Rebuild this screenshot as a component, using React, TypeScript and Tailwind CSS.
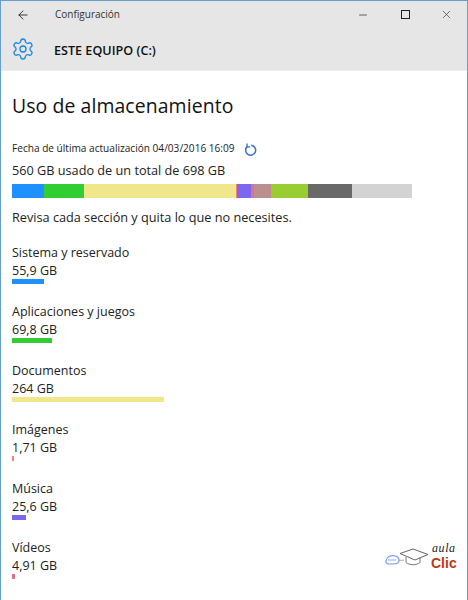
import { ArrowLeft, Minus, X, Settings } from 'lucide-react'

const segments = [
  { w: 'w-[32px]', bg: 'bg-[#1e90ff]' },
  { w: 'w-[40px]', bg: 'bg-[#32cd32]' },
  { w: 'w-[152px]', bg: 'bg-[#f0e68c]' },
  { w: 'w-[1px]', bg: 'bg-[#fa8072]' },
  { w: 'w-[14px]', bg: 'bg-[#7b68ee]' },
  { w: 'w-[3px]', bg: 'bg-[#db7093]' },
  { w: 'w-[17px]', bg: 'bg-[#bc8f8f]' },
  { w: 'w-[37px]', bg: 'bg-[#9acd32]' },
  { w: 'w-[44px]', bg: 'bg-[#696969]' },
  { w: 'w-[60px]', bg: 'bg-[#d3d3d3]' },
]

const sections = [
  { name: 'Sistema y reservado', size: '55,9 GB', w: 'w-[32px]', bg: 'bg-[#1e90ff]' },
  { name: 'Aplicaciones y juegos', size: '69,8 GB', w: 'w-[40px]', bg: 'bg-[#32cd32]' },
  { name: 'Documentos', size: '264 GB', w: 'w-[152px]', bg: 'bg-[#f0e68c]' },
  { name: 'Imágenes', size: '1,71 GB', w: 'w-[2px]', bg: 'bg-[#fa8072]' },
  { name: 'Música', size: '25,6 GB', w: 'w-[14px]', bg: 'bg-[#7b68ee]' },
  { name: 'Vídeos', size: '4,91 GB', w: 'w-[3px]', bg: 'bg-[#db7093]' },
]

function RefreshIcon() {
  return (
    <svg width="14" height="14" viewBox="0 0 14 14" fill="none" className="ml-[9px] mt-[3px]" stroke="#3a6fd8" strokeWidth="1.5">
      <path d="M3.6 3.2A5 5 0 1 0 7.2 2.2" />
      <path d="M3 0.6v3.2h3.2" strokeWidth="1.3" />
    </svg>
  )
}

function AulaClicLogo() {
  return (
    <div className="absolute left-[384px] top-[540px] flex items-start">
      <svg width="45" height="26" viewBox="0 0 45 26" fill="none" className="mt-[6px]">
        <path d="M1 14c.5-3.500 4.500-6 8-5.300 3 .5 5 2.500 5 4.800 0 2-2 3.500-5.500 3.500H4.500c-2.500 0-4-1-3.500-3z" stroke="#7d9fe8" strokeWidth="1.2" />
        <path d="M3 13h8" stroke="#7d9fe8" strokeWidth="0.9" />
        <path d="M14 13c2 .5 3 .5 5 0" stroke="#8a8a8a" strokeWidth="0.8" />
        <path d="M15 6.500 L28 2 L43 7.500 L30 13 Z" stroke="#666" strokeWidth="1" />
        <path d="M21 10v5.500c4 3 10 3 14 0V10" stroke="#777" strokeWidth="1" />
      </svg>
      <div className="ml-[1px] flex flex-col items-center">
        <span className="h-[14px] font-['Liberation_Serif',serif] text-[12px] italic leading-[14px] tracking-[0.6px] text-[#222]">aula</span>
        <span className="h-[16px] font-['Liberation_Sans',sans-serif] text-[14px] font-bold leading-[16px] text-[#c0390f]">Clic</span>
      </div>
    </div>
  )
}

export default function App() {
  return (
    <div className="relative flex h-[600px] w-[468px] flex-col overflow-hidden border-x border-t border-[#6a9fcb] bg-white font-['Open_Sans',sans-serif] text-[#1a1a1a]">
      {/* Title bar */}
      <div className="flex h-[27px] shrink-0 items-center bg-[#e6e6e6]">
        <ArrowLeft size={14} strokeWidth={1.5} className="ml-[15px] text-[#222]" />
        <span className="ml-[25px] text-[10px] text-[#333]">Configuración</span>
        <div className="ml-auto flex items-center">
          <Minus size={12} strokeWidth={1.5} className="text-[#333]" />
          <div className="ml-[32px] h-[9px] w-[9px] border border-[#222]" />
          <X size={13} strokeWidth={1.2} className="ml-[30px] mr-[14px] text-[#333]" />
        </div>
      </div>

      {/* Header */}
      <div className="flex h-[43px] shrink-0 items-center border-b border-[#ececec] bg-[#e6e6e6]">
        <Settings size={24} strokeWidth={1.3} className="ml-[10px] text-[#1e88d8]" />
        <span className="ml-[19px] mt-[4px] text-[12.600px] font-semibold text-[#111]">ESTE EQUIPO (C:)</span>
      </div>

      {/* Content */}
      <div className="flex flex-col pl-[11px]">
        <h1 className="mt-[20px] h-[30px] text-[19.400px] leading-[30px] tracking-[0.1px] text-[#111]">Uso de almacenamiento</h1>

        <div className="mt-[20px] flex h-[14px] items-center text-[10.100px] leading-[16px] text-[#222]">
          <span>Fecha de última actualización 04/03/2016 16:09</span>
          <RefreshIcon />
        </div>
        <div className="mt-[5px] h-[18px] text-[12.700px] leading-[20px] text-[#222]">560 GB usado de un total de 698 GB</div>

        <div className="mt-[6px] flex h-[14px]">
          {segments.map((s, i) => (
            <div key={i} className={`${s.w} ${s.bg} h-full`} />
          ))}
        </div>

        <div className="mt-[9px] h-[18px] text-[12.700px] leading-[20px] text-[#222]">Revisa cada sección y quita lo que no necesites.</div>

        <div className="mt-[18px] flex flex-col gap-[18px]">
          {sections.map((s) => (
            <div key={s.name} className="flex h-[41px] flex-col">
              <span className="h-[18px] text-[12.500px] leading-[20px] text-[#222]">{s.name}</span>
              <span className="h-[18px] text-[12.500px] leading-[20px] text-[#222]">{s.size}</span>
              <div className={`${s.w} ${s.bg} h-[5px] shrink-0`} />
            </div>
          ))}
        </div>
      </div>

      <AulaClicLogo />
    </div>
  )
}
